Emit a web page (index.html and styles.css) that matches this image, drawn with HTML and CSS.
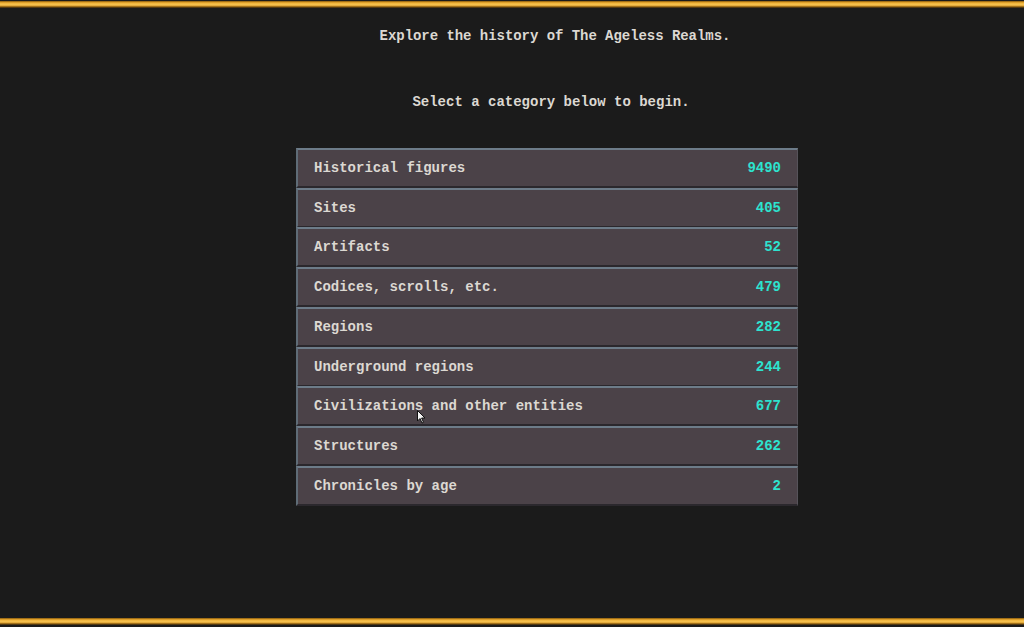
FILE: index.html
```html
<!DOCTYPE html>
<html>
<head>
<meta charset="utf-8">
<link rel="stylesheet" href="styles.css">
</head>
<body>
<div class="frame">
  <div class="gold-bar"></div>
  <main class="content">
    <p class="intro">Explore the history of The Ageless Realms.</p>
    <p class="prompt">Select a category below to begin.</p>
    <ul class="categories">
      <li class="row"><span>Historical figures</span><span class="count">9490</span></li>
      <li class="row"><span>Sites</span><span class="count">405</span></li>
      <li class="row"><span>Artifacts</span><span class="count">52</span></li>
      <li class="row"><span>Codices, scrolls, etc.</span><span class="count">479</span></li>
      <li class="row"><span>Regions</span><span class="count">282</span></li>
      <li class="row"><span>Underground regions</span><span class="count">244</span></li>
      <li class="row cursor-row"><span>Civilizations and other entities</span><span class="count">677</span>
        <svg class="cursor" width="9" height="14" viewBox="0 0 9 14"><path d="M0.5 0.5 L0.5 11 L3 8.5 L5 13 L6.5 12.3 L4.6 8 L8 8 Z" fill="#f4f4f4" stroke="#111" stroke-width="1"/></svg>
      </li>
      <li class="row"><span>Structures</span><span class="count">262</span></li>
      <li class="row"><span>Chronicles by age</span><span class="count">2</span></li>
    </ul>
  </main>
  <div class="gold-bar bottom"></div>
</div>
</body>
</html>
```

FILE: styles.css
```css
* { box-sizing: border-box; }
html, body {
  margin: 0;
  padding: 0;
  background: #1b1b1b;
}
body {
  width: 1024px;
  height: 627px;
  overflow: hidden;
  font-family: "Liberation Mono", "DejaVu Sans Mono", monospace;
  font-weight: bold;
  font-size: 14px;
  color: #dcd8d2;
}
.frame {
  display: flex;
  flex-direction: column;
  height: 627px;
  padding-top: 1px;
}
.gold-bar {
  height: 7px;
  background: linear-gradient(#7a5410 0, #c98a1c 1px, #f2b53a 2px, #f6c454 4px, #d59523 5px, #6b4a12 6px, #3a2a12 7px);
  flex: none;
}
.gold-bar.bottom {
  margin-top: auto;
  margin-bottom: 2px;
}
.content {
  display: flex;
  flex-direction: column;
  align-items: center;
  padding-left: 70px;
}
.intro {
  margin: 20px 0 0 16px;
  line-height: 16px;
  letter-spacing: -0.05px;
}
.prompt {
  margin: 50px 0 0 8px;
  line-height: 16px;
}
.categories {
  list-style: none;
  margin: 38px 0 0 0;
  padding: 0;
  width: 502px;
  display: flex;
  flex-direction: column;
}
.row {
  position: relative;
  display: flex;
  justify-content: space-between;
  align-items: center;
  height: 40px;
  padding: 0 16px 0 16px;
  background: #4b4248;
  border-top: 2px solid #6d7c89;
  border-left: 2px solid #5f6c77;
  border-right: 1px solid #56535a;
  border-bottom: 2px solid #2b282d;
  line-height: 16px;
  margin-bottom: -0.3px;
}
.count {
  color: #2de3cf;
}
.cursor {
  position: absolute;
  left: 119px;
  top: 22px;
}
```
